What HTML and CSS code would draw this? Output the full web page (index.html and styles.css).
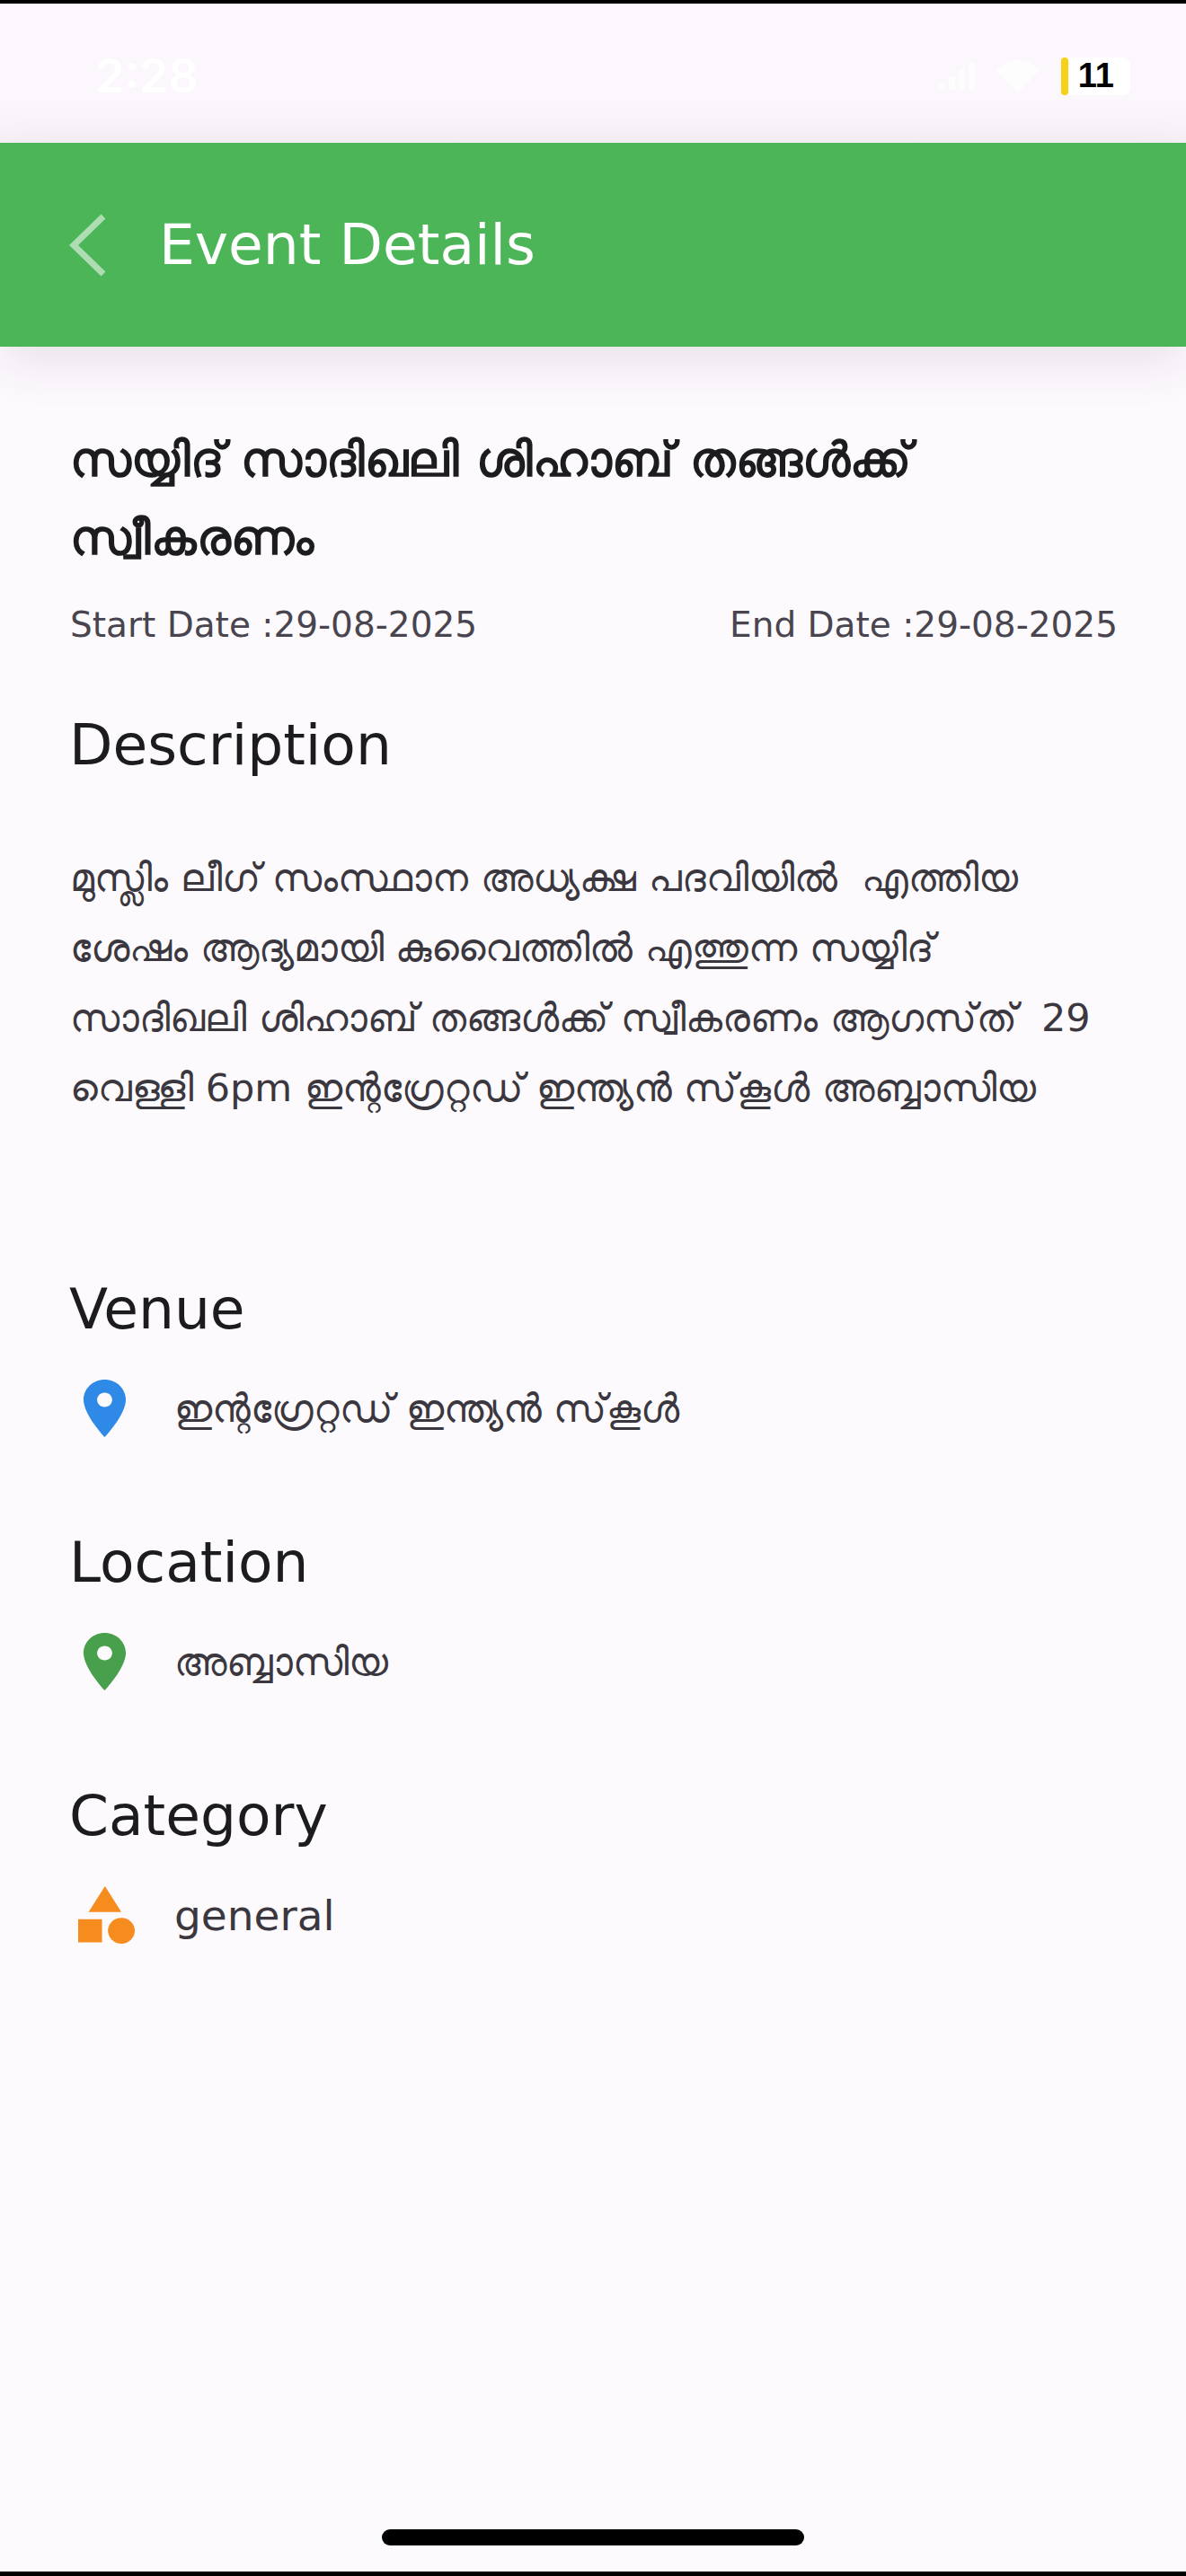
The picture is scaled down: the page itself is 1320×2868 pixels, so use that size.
FILE: index.html
```html
<!DOCTYPE html>
<html lang="ml">
<head>
    <meta charset="UTF-8">
    <meta name="viewport" content="width=device-width, initial-scale=1.0">
    <title>Event Details</title>
    <link rel="stylesheet" href="styles.css">
</head>
<body>
    <div class="phone">
        <div class="status-bar">
            <span class="clock">2:28</span>
            <div class="status-right">
                <svg class="signal" viewBox="0 0 40 30" width="40" height="30"><path d="M0 22h7v8H0zM11 15h7v15h-7zM22 8h7v22h-7zM33 0h7v30h-7z" fill="#fff"/></svg>
                <svg class="wifi" viewBox="0 0 24 18" width="48" height="36"><path d="M12 18 0 5.500C7-1.800 17-1.800 24 5.500z" fill="#fff"/></svg>
                <div class="battery"><span class="battery-bar"></span><span class="battery-num">11</span></div>
            </div>
        </div>

        <header class="app-bar">
            <svg class="back" viewBox="0 0 42 70" width="42" height="70"><path d="M38 3 5 35l33 32" fill="none" stroke="#fff" stroke-width="7"/></svg>
            <h1>Event Details</h1>
        </header>

        <main class="content">
            <h2 class="event-title">സയ്യിദ് സാദിഖലി ശിഹാബ് തങ്ങൾക്ക് സ്വീകരണം</h2>
            <div class="dates">
                <span>Start Date :29-08-2025</span>
                <span>End Date :29-08-2025</span>
            </div>

            <h3 class="section-title desc-title">Description</h3>
            <p class="description">മുസ്ലിം ലീഗ് സംസ്ഥാന അധ്യക്ഷ പദവിയിൽ&nbsp; എത്തിയ<br>ശേഷം ആദ്യമായി കുവൈത്തിൽ എത്തുന്ന സയ്യിദ്<br>സാദിഖലി ശിഹാബ് തങ്ങൾക്ക് സ്വീകരണം ആഗസ്&zwnj;ത്&nbsp; 29<br>വെള്ളി 6pm ഇന്റഗ്രേറ്റഡ് ഇന്ത്യൻ സ്&zwnj;കൂൾ അബ്ബാസിയ</p>

            <section class="info venue">
                <h3 class="section-title">Venue</h3>
                <div class="info-row">
                    <svg class="icon" viewBox="5 2 14 20" preserveAspectRatio="none"><path fill="#2e8ae6" d="M12 2C8.130 2 5 5.130 5 9c0 5.250 7 13 7 13s7-7.750 7-13c0-3.870-3.130-7-7-7zm0 9.500c-1.380 0-2.500-1.120-2.500-2.500s1.120-2.500 2.500-2.500 2.500 1.120 2.500 2.500-1.120 2.500-2.500 2.500z"/></svg>
                    <span>ഇന്റഗ്രേറ്റഡ് ഇന്ത്യൻ സ്&zwnj;കൂൾ</span>
                </div>
            </section>

            <section class="info location">
                <h3 class="section-title">Location</h3>
                <div class="info-row">
                    <svg class="icon" viewBox="5 2 14 20" preserveAspectRatio="none"><path fill="#489f4c" d="M12 2C8.130 2 5 5.130 5 9c0 5.250 7 13 7 13s7-7.750 7-13c0-3.870-3.130-7-7-7zm0 9.500c-1.380 0-2.500-1.120-2.500-2.500s1.120-2.500 2.500-2.500 2.500 1.120 2.500 2.500-1.120 2.500-2.500 2.500z"/></svg>
                    <span>അബ്ബാസിയ</span>
                </div>
            </section>

            <section class="info category">
                <h3 class="section-title">Category</h3>
                <div class="info-row">
                    <svg class="icon icon-wide" viewBox="3 2 19 20" preserveAspectRatio="none"><path fill="#f68c1e" d="M12 2 6.500 11h11zM3 13.500h8v8H3z"/><circle fill="#f68c1e" cx="17.500" cy="17.500" r="4.500"/></svg>
                    <span class="plain">general</span>
                </div>
            </section>
        </main>

        <div class="home-bar"><span></span></div>
    </div>
</body>
</html>
```

FILE: styles.css
```css
* {
    box-sizing: border-box;
}
html, body {
    margin: 0;
    padding: 0;
}
body {
    font-family: "DejaVu Sans", "Noto Sans", sans-serif;
    background: #fdfafe;
    color: #1c1b1f;
}
.phone {
    height: 2868px;
    display: flex;
    flex-direction: column;
    border-top: 4px solid #000;
    border-bottom: 5px solid #000;
    overflow: hidden;
}
.status-bar {
    height: 155px;
    flex: none;
    display: flex;
    align-items: center;
    justify-content: space-between;
    padding: 6px 62px 0 106px;
    background: linear-gradient(#fcf7fc 70%, #f5f1f6);
}
.clock {
    color: #fff;
    font-family: Inter, sans-serif;
    font-size: 52px;
    font-weight: 600;
}
.status-right {
    display: flex;
    align-items: center;
    gap: 24px;
}
.signal, .wifi {
    opacity: 0.8;
}
.battery {
    display: flex;
    align-items: center;
    gap: 11px;
    height: 42px;
    padding-right: 18px;
    background: #fff;
    border-radius: 8px;
}
.battery-bar {
    width: 8px;
    height: 42px;
    background: #f7d117;
    border-radius: 4px;
}
.battery-num {
    font-size: 38px;
    font-weight: 700;
    color: #000;
    font-family: "Liberation Sans", sans-serif;
}
.app-bar {
    height: 227px;
    flex: none;
    display: flex;
    align-items: center;
    gap: 58px;
    padding-left: 77px;
    background: #4cb558;
    box-shadow: 0 20px 50px rgba(60, 30, 60, 0.1);
}
.back {
    opacity: 0.55;
}
.app-bar h1 {
    margin: 0;
    color: #fff;
    font-size: 63px;
    font-weight: 400;
}
.content {
    flex: 1;
    padding: 82px 76px 0 78px;
}
.event-title {
    margin: 0;
    font-size: 53px;
    line-height: 87px;
    font-weight: 700;
    color: #1c1b1f;
}
.dates {
    display: flex;
    justify-content: space-between;
    margin-top: 31px;
    font-size: 39px;
    line-height: 46px;
    color: #49454f;
}
.section-title {
    margin: 0 0 0 -1px;
    font-size: 63px;
    line-height: 80px;
    font-weight: 400;
}
.desc-title {
    margin-top: 71px;
}
.description {
    margin: 68px 0 0;
    font-size: 43px;
    line-height: 78px;
    color: #3a383e;
}
.info.venue {
    margin-top: 168px;
}
.info.location {
    margin-top: 100px;
}
.info.category {
    margin-top: 100px;
}
.info-row {
    display: flex;
    align-items: center;
    gap: 54px;
    margin-top: 38px;
    padding-left: 15px;
    font-size: 43px;
    color: #3a383e;
}
.icon {
    width: 47px;
    height: 64px;
    flex: none;
}
.icon-wide {
    width: 63px;
    margin-left: -6px;
    margin-right: -10px;
}
.plain {
    font-size: 47px;
}
.home-bar {
    flex: none;
    height: 47px;
    display: flex;
    justify-content: center;
}
.home-bar span {
    width: 470px;
    height: 18px;
    background: #000;
    border-radius: 9px;
}
```
